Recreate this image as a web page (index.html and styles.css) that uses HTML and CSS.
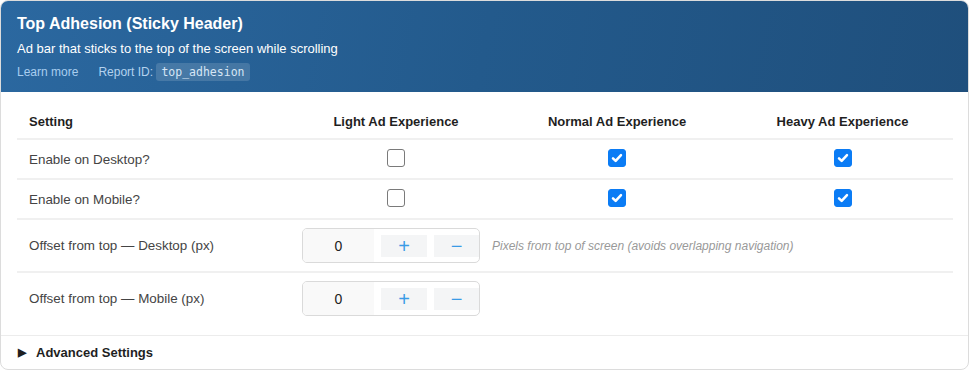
FILE: index.html
```html
<!DOCTYPE html>
<html lang="en">
<head>
    <meta charset="UTF-8">
    <title>Top Adhesion</title>
    <link rel="stylesheet" href="styles.css">
</head>
<body>
    <div class="card">
        <div class="card-header">
            <div class="title">Top Adhesion (Sticky Header)</div>
            <div class="subtitle">Ad bar that sticks to the top of the screen while scrolling</div>
            <div class="meta">
                <a class="learn" href="#">Learn more</a>
                <span class="report">Report ID: <code>top_adhesion</code></span>
            </div>
        </div>

        <div class="card-body">
            <table class="settings">
                <colgroup>
                    <col class="col-name">
                    <col class="col-light">
                    <col class="col-normal">
                    <col class="col-heavy">
                </colgroup>
                <thead>
                    <tr>
                        <th class="name">Setting</th>
                        <th>Light Ad Experience</th>
                        <th>Normal Ad Experience</th>
                        <th>Heavy Ad Experience</th>
                    </tr>
                </thead>
                <tbody>
                    <tr>
                        <td class="name">Enable on Desktop?</td>
                        <td><span class="check"></span></td>
                        <td><span class="check on"><svg viewBox="0 0 18 18"><path d="M4.5 9.3l3 3 6-6.6" /></svg></span></td>
                        <td><span class="check on"><svg viewBox="0 0 18 18"><path d="M4.5 9.3l3 3 6-6.6" /></svg></span></td>
                    </tr>
                    <tr>
                        <td class="name">Enable on Mobile?</td>
                        <td><span class="check"></span></td>
                        <td><span class="check on"><svg viewBox="0 0 18 18"><path d="M4.5 9.3l3 3 6-6.6" /></svg></span></td>
                        <td><span class="check on"><svg viewBox="0 0 18 18"><path d="M4.5 9.3l3 3 6-6.6" /></svg></span></td>
                    </tr>
                    <tr class="tall">
                        <td class="name">Offset from top — Desktop (px)</td>
                        <td colspan="3" class="left">
                            <div class="number-row">
                                <div class="stepper">
                                    <span class="value">0</span>
                                    <button class="step">+</button>
                                    <button class="step">−</button>
                                </div>
                                <span class="hint">Pixels from top of screen (avoids overlapping navigation)</span>
                            </div>
                        </td>
                    </tr>
                    <tr class="tall last">
                        <td class="name">Offset from top — Mobile (px)</td>
                        <td colspan="3" class="left">
                            <div class="number-row">
                                <div class="stepper">
                                    <span class="value">0</span>
                                    <button class="step">+</button>
                                    <button class="step">−</button>
                                </div>
                            </div>
                        </td>
                    </tr>
                </tbody>
            </table>
        </div>

        <div class="advanced">
            <span class="arrow">▶</span>
            <span>Advanced Settings</span>
        </div>
    </div>
</body>
</html>
```

FILE: styles.css
```css
body {
    margin: 0;
    font-family: 'Liberation Sans', Arial, sans-serif;
    background-color: #ffffff;
    color: #333;
}

.card {
    width: 967px;
    border: 1px solid #dcdcdc;
    border-radius: 8px;
    overflow: hidden;
    background-color: #fff;
}

.card-header {
    height: 91px;
    box-sizing: border-box;
    padding: 12px 16px 0 16px;
    background: linear-gradient(100deg, #2b68a0 0%, #235a8c 50%, #1f4f7c 100%);
    color: #fff;
}

.title {
    font-size: 16px;
    font-weight: bold;
    line-height: 22px;
}

.subtitle {
    margin-top: 4px;
    font-size: 13px;
    line-height: 20px;
}

.meta {
    display: flex;
    align-items: center;
    gap: 20px;
    margin-top: 3px;
    font-size: 12px;
    line-height: 20px;
}

.learn {
    color: #a8cdef;
    text-decoration: none;
}

.report {
    color: #b3d2ee;
}

.report code {
    font-family: 'DejaVu Sans Mono', 'Liberation Mono', monospace;
    font-size: 11.5px;
    color: #d6e6f5;
    background-color: rgba(255, 255, 255, 0.14);
    padding: 2px 5px;
    border-radius: 3px;
}

.card-body {
    padding: 10px 16px 11px 16px;
    border-bottom: 1px solid #ececec;
}

.settings {
    width: 936px;
    table-layout: fixed;
    border-collapse: collapse;
    font-size: 13px;
}

.col-name { width: 273px; }
.col-light { width: 212px; }
.col-normal { width: 230px; }
.col-heavy { width: 221px; }

.settings th {
    height: 34px;
    padding: 2px 12px 0 12px;
    font-weight: bold;
    color: #1f1f1f;
    text-align: center;
    border-bottom: 2px solid #f0f0f0;
}

.settings td {
    height: 38px;
    padding: 0 12px;
    font-size: 13.4px;
    color: #444;
    text-align: center;
    border-bottom: 2px solid #f0f0f0;
}

.settings .name {
    text-align: left;
}

.settings td.left {
    text-align: left;
}

.settings tr.tall td {
    height: 51px;
}

.settings tr.last td {
    border-bottom: none;
}

.check {
    display: block;
    width: 16px;
    height: 16px;
    margin: -3px auto 0 auto;
    border: 1px solid #7a7a7a;
    border-radius: 3px;
    background-color: #fff;
}

.check.on {
    border-color: #0b7cf5;
    background-color: #0b7cf5;
}

.check svg {
    display: block;
    width: 16px;
    height: 16px;
}

.check path {
    fill: none;
    stroke: #fff;
    stroke-width: 2.8;
    stroke-linecap: round;
    stroke-linejoin: round;
}

.number-row {
    display: flex;
    align-items: center;
    gap: 12px;
}

.stepper {
    display: flex;
    align-items: center;
    width: 176px;
    height: 33px;
    border: 1px solid #dadada;
    border-radius: 5px;
    overflow: hidden;
}

.value {
    width: 71px;
    height: 100%;
    display: flex;
    align-items: center;
    justify-content: center;
    background-color: #f9f9f9;
    font-size: 14px;
    color: #222;
}

.step {
    width: 46px;
    height: 22px;
    margin-left: 7px;
    padding: 0;
    border: none;
    background-color: #f4f5f6;
    color: #3a9be6;
    font-family: 'Liberation Sans', Arial, sans-serif;
    font-size: 20px;
    line-height: 22px;
}

.step:last-child {
    width: 45px;
}

.hint {
    font-size: 12px;
    font-style: italic;
    color: #999;
}

.advanced {
    display: flex;
    align-items: center;
    gap: 10px;
    height: 33px;
    padding-left: 17px;
    font-size: 13px;
    font-weight: bold;
    color: #1f1f1f;
}

.arrow {
    font-size: 11px;
}
```
